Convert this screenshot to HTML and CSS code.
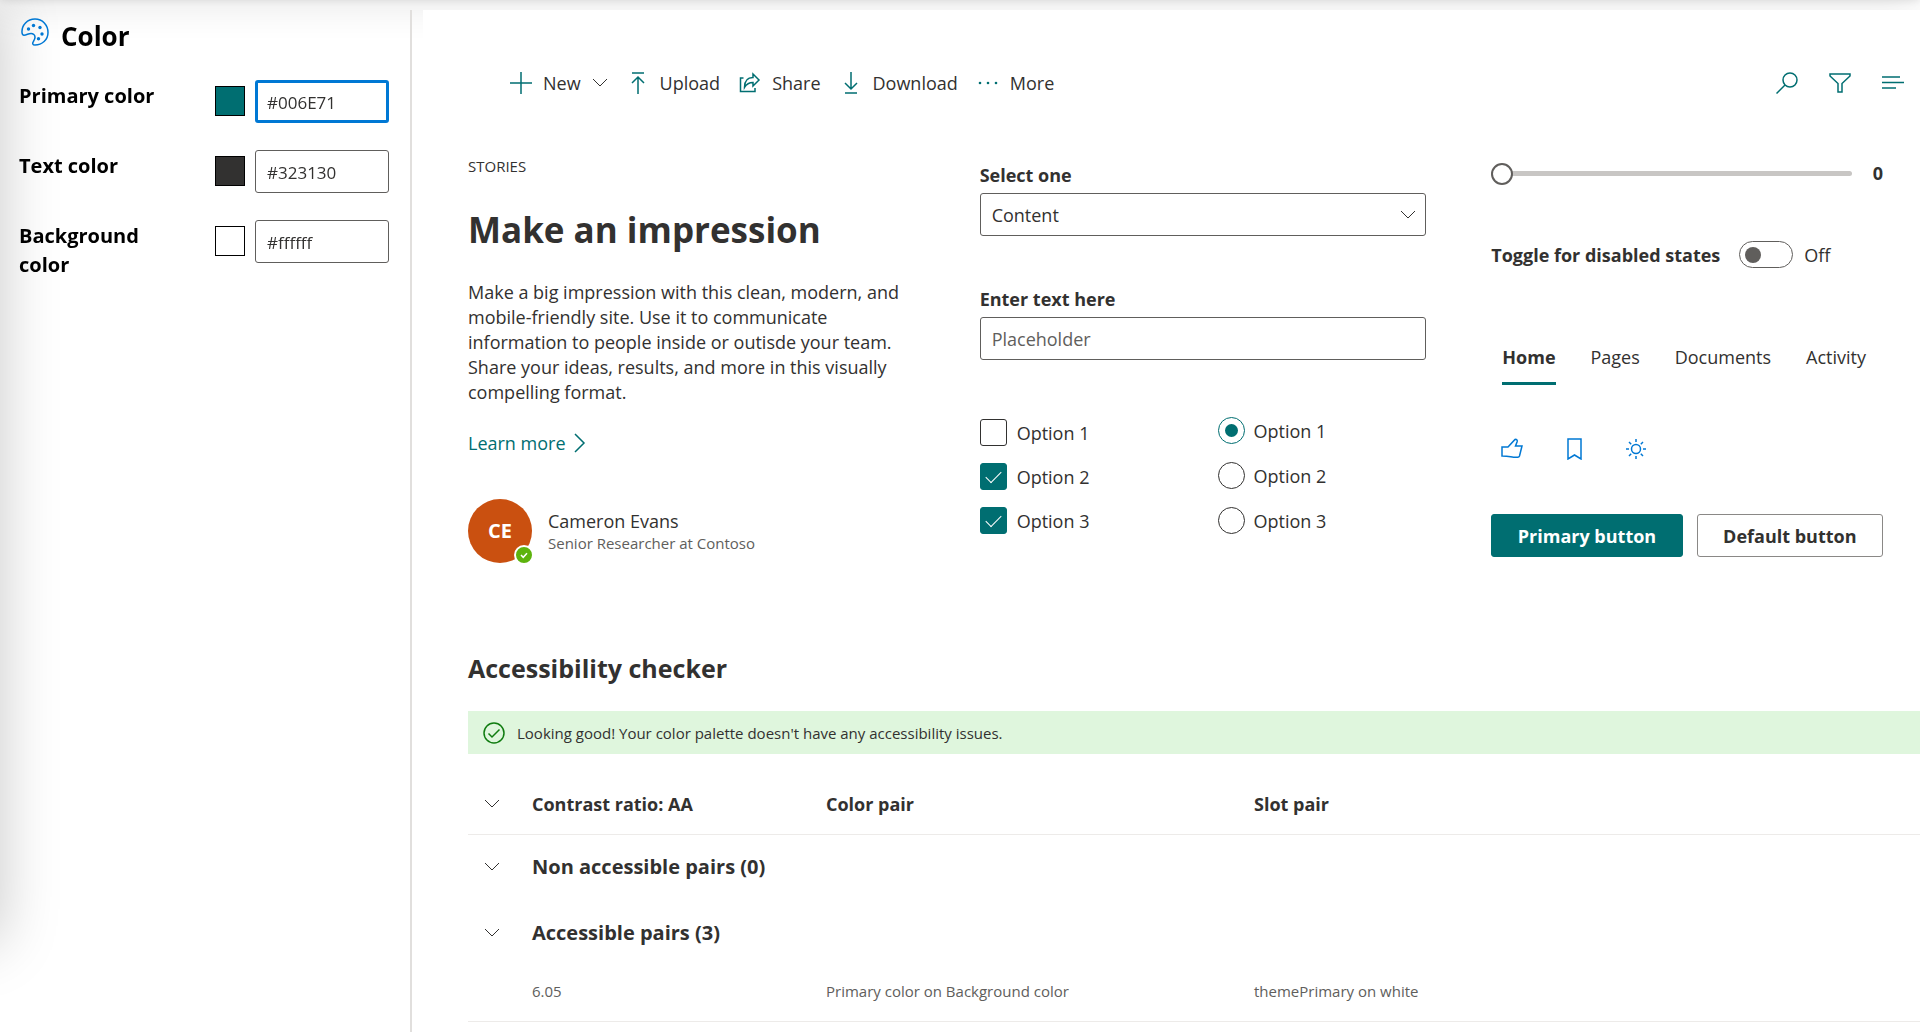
FILE: index.html
```html
<!DOCTYPE html>
<html lang="en">
<head>
  <meta charset="utf-8">
  <title>Theme Designer</title>
  <meta name="viewport" content="width=device-width, initial-scale=1">
  <link rel="stylesheet" href="styles.css">
</head>
<body>
  <div class="top-shadow"></div>
  <div class="side-shadow"></div>
  <div class="designer">

    <!-- color slots -->
    <aside class="sidebar">
      <div class="sidebar-title">
        <svg class="palette-icon" viewBox="0 0 28 28" width="28" height="28" fill="none" stroke="#0078d4" stroke-width="1.5">
          <path d="M1 14.500C.5 7 6.500 1 14 1s13 6 13 13.500S21 27 14 27c-2.500 0-2.800-1.800-1.600-3.500 2-3 2.200-5.500.2-7.200-3.200-2.600-6.400.9-9.600.9C1.700 17.200 1.100 16 1 14.500z"/>
          <g fill="#0078d4" stroke="none"><circle cx="7.500" cy="11" r="1.700"/><circle cx="12.500" cy="7.500" r="1.700"/><circle cx="19" cy="9.500" r="1.700"/><circle cx="21" cy="16" r="1.700"/><circle cx="17.500" cy="20.800" r="1.700"/></g>
        </svg>
        <h2>Color</h2>
      </div>
      <div class="slot">
        <label for="primaryColor">Primary color</label>
        <button class="swatch swatch-primary" type="button" aria-label="Pick primary color"></button>
        <input class="slot-input active" id="primaryColor" type="text" value="#006E71">
      </div>
      <div class="slot">
        <label for="textColor">Text color</label>
        <button class="swatch swatch-text" type="button" aria-label="Pick text color"></button>
        <input class="slot-input" id="textColor" type="text" value="#323130">
      </div>
      <div class="slot">
        <label for="backgroundColor">Background color</label>
        <button class="swatch swatch-background" type="button" aria-label="Pick background color"></button>
        <input class="slot-input" id="backgroundColor" type="text" value="#ffffff">
      </div>
    </aside>

    <main class="content">
      <div class="command-bar">
        <button class="command" type="button">
          <svg viewBox="0 0 22 22" width="22" height="22"><path d="M11 0v22M0 11h22"/></svg>
          <span>New</span>
          <svg class="chevron" viewBox="0 0 16 10" width="16" height="10"><path d="M1 1l7 7 7-7"/></svg>
        </button>
        <button class="command" type="button">
          <svg viewBox="0 0 22 22" width="22" height="22"><path d="M5 1h12M11 22V5M5 11l6-6 6 6"/></svg>
          <span>Upload</span>
        </button>
        <button class="command" type="button">
          <svg viewBox="0 0 22 22" width="22" height="22"><path d="M4.500 6H1.500v13.500H16V16"/><path d="M14 2l6 6-6 6v-3.500c-4 0-6.500 1.500-8.500 5C5.500 9.500 8 5.500 14 5.500z"/></svg>
          <span>Share</span>
        </button>
        <button class="command" type="button">
          <svg viewBox="0 0 22 22" width="22" height="22"><path d="M5 21h12M11 0v17M5 11l6 6 6-6"/></svg>
          <span>Download</span>
        </button>
        <button class="command" type="button">
          <svg class="dots" viewBox="0 0 22 22" width="22" height="22"><circle cx="3" cy="11" r="1.300"/><circle cx="11" cy="11" r="1.300"/><circle cx="19" cy="11" r="1.300"/></svg>
          <span>More</span>
        </button>
        <div class="command-far">
          <button class="command" type="button" aria-label="Search">
            <svg viewBox="0 0 22 22" width="22" height="22"><circle cx="14" cy="8" r="7"/><path d="M9 13l-8.500 8.500"/></svg>
          </button>
          <button class="command" type="button" aria-label="Filter">
            <svg viewBox="0 0 22 22" width="22" height="22"><path d="M1 2h20v2l-8 7.500V20H9v-8.500L1 4z"/></svg>
          </button>
          <button class="command" type="button" aria-label="List">
            <svg viewBox="0 0 22 22" width="22" height="22"><path d="M0 5h18M0 10.500h22M0 16h14"/></svg>
          </button>
        </div>
      </div>

      <div class="samples">
        <section class="story">
          <div class="eyebrow">STORIES</div>
          <h1>Make an impression</h1>
          <p>Make a big impression with this clean, modern, and mobile-friendly site. Use it to communicate information to people inside or outisde your team. Share your ideas, results, and more in this visually compelling format.</p>
          <a class="learn-more" href="#">Learn more
            <svg viewBox="0 0 12 20" width="12" height="20"><path d="M1 1l9 9-9 9"/></svg>
          </a>
          <div class="persona">
            <div class="coin">CE
              <span class="presence"><svg viewBox="0 0 16 16" width="16" height="16"><path d="M5 8l2.200 2.300L11 6.300"/></svg></span>
            </div>
            <div>
              <div class="persona-name">Cameron Evans</div>
              <div class="persona-role">Senior Researcher at Contoso</div>
            </div>
          </div>
        </section>

        <section class="fields">
          <label class="field-label" for="selectOne">Select one</label>
          <div class="dropdown">
            <select id="selectOne"><option>Content</option></select>
            <svg class="chevron" viewBox="0 0 16 10" width="16" height="10"><path d="M1 1l7 7 7-7"/></svg>
          </div>
          <label class="field-label" for="enterText">Enter text here</label>
          <input class="text-field" id="enterText" type="text" placeholder="Placeholder">
          <div class="choices">
            <div class="checks">
              <label><input type="checkbox">Option 1</label>
              <label><input type="checkbox" checked>Option 2</label>
              <label><input type="checkbox" checked>Option 3</label>
            </div>
            <div class="radios">
              <label><input type="radio" name="option" checked>Option 1</label>
              <label><input type="radio" name="option">Option 2</label>
              <label><input type="radio" name="option">Option 3</label>
            </div>
          </div>
        </section>

        <section class="controls">
          <div class="slider">
            <input type="range" id="slider" min="0" max="10" value="0" aria-label="Slider">
            <output for="slider">0</output>
          </div>
          <div class="toggle">
            <label for="toggleStates">Toggle for disabled states</label>
            <input type="checkbox" role="switch" id="toggleStates">
            <span>Off</span>
          </div>
          <nav class="pivot">
            <a class="selected" href="#">Home</a>
            <a href="#">Pages</a>
            <a href="#">Documents</a>
            <a href="#">Activity</a>
          </nav>
          <div class="icon-buttons">
            <button type="button" aria-label="Like">
              <svg viewBox="0 0 22 22" width="22" height="22"><path d="M1 9h6L14 1.500c1.500-.5 2.500.7 2.200 2L14.500 8H21l-2.500 10c-.3.800-.8 1.200-1.600 1.200h-4.400C9.500 19 8 18 1 18z"/></svg>
            </button>
            <button type="button" aria-label="Bookmark">
              <svg viewBox="0 0 22 22" width="22" height="22"><path d="M5 1h13v20l-6.500-4L5 21z"/></svg>
            </button>
            <button type="button" aria-label="Brightness">
              <svg viewBox="0 0 22 22" width="22" height="22"><circle cx="11" cy="11" r="4.500"/><path d="M11 1v3M11 18v3M1 11h3M18 11h3M4 4l2.200 2.200M15.800 15.800L18 18M4 18l2.200-2.200M15.800 6.200L18 4"/></svg>
            </button>
          </div>
          <div class="buttons">
            <button class="primary" type="button">Primary button</button>
            <button class="default" type="button">Default button</button>
          </div>
        </section>
      </div>

      <section class="checker">
        <h2>Accessibility checker</h2>
        <div class="message">
          <svg viewBox="0 0 22 22" width="22" height="22"><circle cx="11" cy="11" r="10"/><path d="M5.500 11.500l3.500 3.500 7.500-7.500"/></svg>
          <span>Looking good! Your color palette doesn't have any accessibility issues.</span>
        </div>
        <table class="pairs">
          <thead>
            <tr>
              <th class="expand"><svg class="chevron" viewBox="0 0 16 10" width="16" height="10"><path d="M1 1l7 7 7-7"/></svg></th>
              <th class="ratio">Contrast ratio: AA</th>
              <th class="pair">Color pair</th>
              <th>Slot pair</th>
            </tr>
          </thead>
          <tbody>
            <tr class="group">
              <th class="expand"><svg class="chevron" viewBox="0 0 16 10" width="16" height="10"><path d="M1 1l7 7 7-7"/></svg></th>
              <th colspan="3">Non accessible pairs (0)</th>
            </tr>
            <tr class="group">
              <th class="expand"><svg class="chevron" viewBox="0 0 16 10" width="16" height="10"><path d="M1 1l7 7 7-7"/></svg></th>
              <th colspan="3">Accessible pairs (3)</th>
            </tr>
            <tr class="row">
              <td></td>
              <td>6.05</td>
              <td>Primary color on Background color</td>
              <td>themePrimary on white</td>
            </tr>
          </tbody>
        </table>
      </section>
    </main>
  </div>
</body>
</html>
```

FILE: styles.css
```css
* {
  box-sizing: border-box;
}

body {
  margin: 0;
  background: #fff;
  color: #323130;
  font-family: "Open Sans", "Noto Sans", sans-serif;
  font-size: 18px;
  line-height: 24px;
  overflow: hidden;
}

h1, h2, p {
  margin: 0;
}

button, input, select {
  font: inherit;
  color: inherit;
  margin: 0;
}

button {
  padding: 0;
  border: 0;
  background: none;
}

svg {
  display: block;
  flex: none;
  fill: none;
  stroke: #006e71;
  stroke-width: 1.5;
}

.chevron {
  stroke: #323130;
  stroke-width: 1;
}

/* shadows of the page chrome */
.top-shadow {
  position: fixed;
  top: -20px;
  left: 0;
  right: 0;
  height: 20px;
  box-shadow: 0 0 10px rgba(0, 0, 0, .12), 0 0 40px rgba(0, 0, 0, .16);
}

.side-shadow {
  position: fixed;
  top: 0;
  bottom: 90px;
  left: -100px;
  width: 100px;
  box-shadow: 0 0 60px rgba(0, 0, 0, .22);
}

.designer {
  display: flex;
  min-height: 100vh;
  padding-top: 10px;
}

/* sidebar */
.sidebar {
  position: relative;
  flex: none;
  width: 412px;
  padding: 8px 21px 0 19px;
  border-right: 2px solid #e1dfdd;
  color: #000;
}

.sidebar-title {
  display: flex;
  gap: 12px;
  height: 62px;
  padding-left: 2px;
}

.sidebar-title .palette-icon {
  stroke: #0078d4;
}

.sidebar-title h2 {
  font-size: 26px;
  line-height: 36px;
}

.slot {
  display: flex;
  align-items: flex-start;
  min-height: 70px;
}

.slot label {
  width: 140px;
  margin-right: 56px;
  padding-top: 1px;
  font-size: 20px;
  font-weight: 700;
  line-height: 29px;
}

.swatch {
  flex: none;
  width: 30px;
  height: 30px;
  margin: 6px 10px 0 0;
  border: 1px solid #000;
}

.swatch-primary { background: #006e71; }
.swatch-text { background: #323130; }
.swatch-background { background: #fff; }

.slot-input,
.text-field,
.dropdown select {
  width: 100%;
  height: 43px;
  padding: 1px 11px 0;
  border: 1px solid #605e5c;
  border-radius: 3px;
  background: #fff;
  color: #323130;
  outline: none;
}

.slot-input {
  flex: 1;
  min-width: 0;
  font-size: 17px;
}

.slot-input.active {
  border: 3px solid #0078d4;
  padding: 1px 9px 0;
}

/* command bar */
.content {
  position: relative;
  flex: 1;
  min-width: 0;
  margin-left: 11px;
  padding-left: 45px;
  background: #fff;
}

.command-bar {
  display: flex;
  align-items: center;
  gap: 19px;
  height: 44px;
  margin-top: 51px;
  padding: 0 16px 0 42px;
}

.command {
  display: flex;
  align-items: center;
  gap: 11px;
}

.dots {
  fill: #006e71;
  stroke: none;
}

.command-far {
  display: flex;
  gap: 31px;
  margin-left: auto;
}

/* sample controls */
.samples {
  display: grid;
  grid-template-columns: 447fr 447fr 392fr;
  column-gap: 65px;
  padding: 49px 37px 0 0;
}

.eyebrow {
  font-size: 15px;
}

.story h1 {
  margin-top: 28px;
  font-size: 35px;
  line-height: 48px;
}

.story p {
  margin-top: 26px;
  line-height: 25px;
}

.learn-more {
  display: flex;
  align-items: center;
  gap: 8px;
  margin-top: 26px;
  color: #006e71;
  text-decoration: none;
}

.persona {
  display: flex;
  align-items: center;
  gap: 16px;
  margin-top: 44px;
}

.coin {
  position: relative;
  width: 64px;
  height: 64px;
  border-radius: 50%;
  background: #ca5010;
  color: #fff;
  font-size: 20px;
  font-weight: 700;
  line-height: 64px;
  text-align: center;
}

.presence {
  position: absolute;
  right: -2px;
  bottom: -2px;
  border: 2px solid #fff;
  border-radius: 50%;
  background: #5db30d;
}

.presence svg {
  stroke: #fff;
}

.persona-role {
  color: #605e5c;
  font-size: 15px;
  line-height: 20px;
}

.fields {
  padding-top: 9px;
}

.field-label {
  display: block;
  margin-bottom: 6px;
  font-weight: 700;
}

.dropdown {
  position: relative;
  margin-bottom: 51px;
}

.dropdown select {
  display: block;
  appearance: none;
}

.dropdown .chevron {
  position: absolute;
  top: 17px;
  right: 10px;
}

.text-field {
  display: block;
}

.text-field::placeholder {
  color: #605e5c;
}

.choices {
  display: grid;
  grid-template-columns: 239fr 208fr;
  margin-top: 56px;
}

.choices label {
  display: flex;
  align-items: center;
}

.choices input {
  appearance: none;
  display: grid;
  place-items: center;
  width: 27px;
  height: 27px;
  border: 1px solid #323130;
}

.checks,
.radios {
  display: flex;
  flex-direction: column;
  gap: 17px;
}

.checks {
  padding-top: 3px;
}

.radios {
  gap: 18px;
  padding-top: 1px;
}

.checks label {
  gap: 10px;
}

.radios label {
  gap: 8px;
}

.checks input {
  border-radius: 3px;
}

.checks input:checked {
  border-color: #006e71;
  background: #006e71;
}

.checks input:checked::before {
  content: "";
  width: 14px;
  height: 7px;
  margin-bottom: 4px;
  border: solid #fff;
  border-width: 0 0 1px 1px;
  transform: rotate(-45deg);
}

.radios input {
  border-radius: 50%;
}

.radios input:checked {
  border-color: #006e71;
}

.radios input:checked::before {
  content: "";
  width: 13px;
  height: 13px;
  border-radius: 50%;
  background: #006e71;
}

.slider {
  display: flex;
  align-items: center;
  justify-content: space-between;
  gap: 21px;
  padding: 7px 0 0;
  font-weight: 700;
}

.slider input {
  appearance: none;
  flex: 1;
  height: 22px;
  background: none;
}

.slider input::-webkit-slider-runnable-track {
  height: 5px;
  border-radius: 3px;
  background: #c8c6c4;
}

.slider input::-webkit-slider-thumb {
  appearance: none;
  width: 22px;
  height: 22px;
  margin-top: -8px;
  border: 2px solid #605e5c;
  border-radius: 50%;
  background: #fff;
}

.toggle {
  display: flex;
  align-items: center;
  gap: 11px;
  margin-top: 56px;
}

.toggle label {
  margin-right: 8px;
  font-weight: 700;
}

.toggle input {
  appearance: none;
  display: flex;
  align-items: center;
  width: 54px;
  height: 27px;
  padding: 0 5px;
  border: 1px solid #605e5c;
  border-radius: 14px;
}

.toggle input::before {
  content: "";
  width: 16px;
  height: 16px;
  border-radius: 50%;
  background: #605e5c;
}

.pivot {
  display: flex;
  justify-content: space-between;
  margin-top: 63px;
  padding: 0 17px 0 11px;
}

.pivot a {
  padding: 14px 0 13px;
  border-bottom: 3px solid transparent;
  color: inherit;
  text-decoration: none;
}

.pivot .selected {
  border-color: #006e71;
  font-weight: 700;
}

.icon-buttons {
  display: flex;
  gap: 40px;
  margin-top: 53px;
  padding-left: 10px;
}

.icon-buttons svg {
  stroke: #0078d4;
}

.buttons {
  display: flex;
  gap: 14px;
  margin-top: 54px;
}

.buttons button {
  flex: 1 1 auto;
  height: 43px;
  border: 1px solid #8a8886;
  border-radius: 3px;
  font-weight: 700;
}

.buttons .primary {
  border-color: #006e71;
  background: #006e71;
  color: #fff;
}

/* accessibility checker */
.checker {
  margin-top: 87px;
}

.checker h2 {
  font-size: 25px;
  line-height: 36px;
}

.message {
  display: flex;
  align-items: center;
  gap: 12px;
  height: 43px;
  margin-top: 25px;
  padding-left: 15px;
  background: #dff6dd;
  font-size: 15px;
}

.message svg {
  stroke: #107c10;
}

.pairs {
  width: 100%;
  margin-top: 20px;
  border-collapse: collapse;
  table-layout: fixed;
  text-align: left;
}

.pairs th,
.pairs td {
  height: 60px;
  padding: 0;
}

.pairs thead tr,
.pairs .row {
  border-bottom: 1px solid #edebe9;
}

.pairs .expand {
  width: 64px;
  padding-left: 16px;
}

.pairs .ratio {
  width: 294px;
}

.pairs .pair {
  width: 428px;
}

.pairs .group th {
  height: 66px;
  font-size: 20px;
}

.pairs td {
  height: 55px;
  padding-bottom: 5px;
  color: #605e5c;
  font-size: 15px;
}
```
